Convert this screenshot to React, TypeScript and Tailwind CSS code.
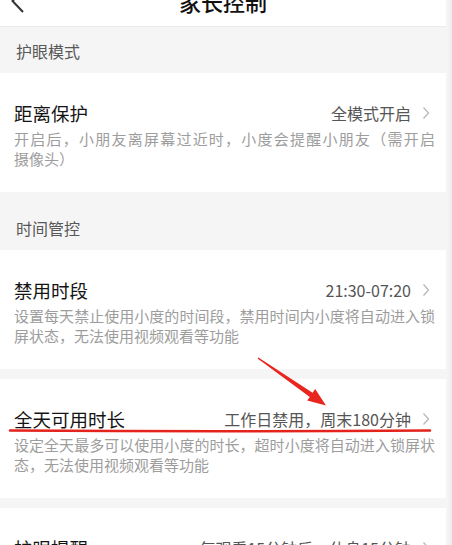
import type { ReactNode } from 'react'

function Chevron() {
  return (
    <svg width="8" height="14" viewBox="0 0 8 14" className="ml-[11px] mr-[5px] shrink-0">
      <path d="M1.5 1.5 L6.5 7 L1.5 12.5" fill="none" stroke="#b8b8b8" strokeWidth="1.3" />
    </svg>
  )
}

function SectionHeader({ children, first }: { children: ReactNode; first?: boolean }) {
  return (
    <div
      className={`bg-[#f5f5f5] px-4 pb-3 text-base leading-5 text-[#585858] ${first ? 'pt-[14px]' : 'pt-[26px]'}`}
    >
      {children}
    </div>
  )
}

function SettingRow({ title, value, desc }: { title: string; value: string; desc?: ReactNode }) {
  return (
    <div className="bg-white pl-[14px] pr-[11px] pt-7 pb-[23px]">
      <div className="flex h-6 items-center justify-between">
        <span className="text-[18.5px] leading-6 text-[#141414]">{title}</span>
        <span className="flex items-center text-base leading-6 text-[#555]">
          {value}
          <Chevron />
        </span>
      </div>
      {desc && <p className="mt-1 text-justify text-[15px] leading-5 text-[#9d9d9d]">{desc}</p>}
    </div>
  )
}

export default function App() {
  return (
    <div className="relative flex h-[545px] w-[452px] overflow-hidden bg-white font-['Noto_Sans_CJK_SC',sans-serif]">
      <div className="min-w-0 flex-1">
        {/* nav bar */}
        <div className="grid h-[27px] grid-cols-[1fr_auto_1fr] overflow-hidden border-b border-[#ececec] bg-white">
          <svg width="14" height="24" viewBox="0 0 14 24" className="-mt-[11px] ml-[11px]">
            <path d="M12 1 L1.5 12 L12 23" fill="none" stroke="#333" strokeWidth="2" />
          </svg>
          <div className="-mt-[10px] text-[22px] font-medium leading-[22px] text-[#111]">家长控制</div>
          <div />
        </div>

        <SectionHeader first>护眼模式</SectionHeader>
        <SettingRow
          title="距离保护"
          value="全模式开启"
          desc={
            <>
              开启后，小朋友离屏幕过近时，小度会提醒小朋友（需开启
              <span className="whitespace-nowrap">摄像头）</span>
            </>
          }
        />

        <SectionHeader>时间管控</SectionHeader>
        <SettingRow
          title="禁用时段"
          value="21:30-07:20"
          desc="设置每天禁止使用小度的时间段，禁用时间内小度将自动进入锁屏状态，无法使用视频观看等功能"
        />
        <div className="h-2.5 bg-[#f5f5f5]" />
        <SettingRow
          title="全天可用时长"
          value="工作日禁用，周末180分钟"
          desc="设定全天最多可以使用小度的时长，超时小度将自动进入锁屏状态，无法使用视频观看等功能"
        />
        <div className="h-2.5 bg-[#f5f5f5]" />
        <SettingRow title="护眼提醒" value="每观看15分钟后，休息15分钟" />
      </div>

      {/* right edge shade */}
      <div className="w-[6px] shrink-0 bg-gradient-to-r from-[#f7f7f7] to-[#ededed]" />

      {/* red markup */}
      <svg className="pointer-events-none absolute left-0 top-0" width="452" height="545" viewBox="0 0 452 545">
        <path d="M10 430.5 Q220 432 430 430.5" fill="none" stroke="#e3231c" strokeWidth="2.6" strokeLinecap="round" />
        <polygon
          points="257.6,358.6 258.4,357.4 312.6,392.7 315.2,389 326,405.5 307.2,400.5 309.8,396.9"
          fill="#e8261d"
        />
      </svg>
    </div>
  )
}
